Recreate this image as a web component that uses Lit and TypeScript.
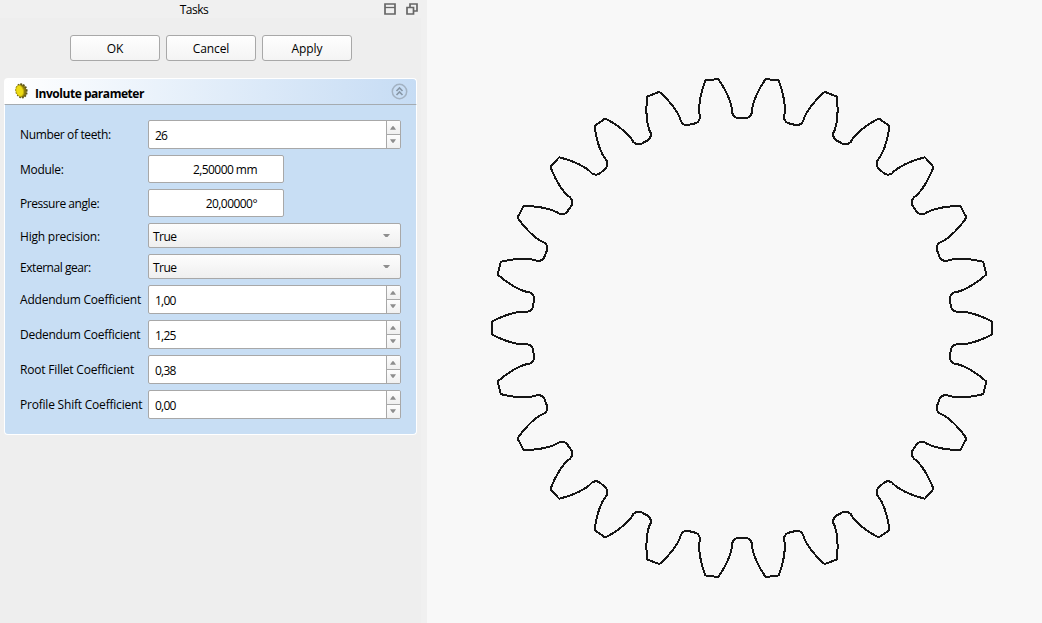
import { LitElement, html, css, svg, nothing } from "lit";
import { customElement, property } from "lit/decorators.js";

/** Builds the closed outline of an external involute gear centred on the origin. */
function gearPath(teeth: number, m: number, angle: number, add: number, ded: number): string {
  const pitch = (m * teeth) / 2;
  const tip = pitch + m * add;
  const root = pitch - m * ded;
  const base = pitch * Math.cos(angle);
  const inv = (a: number) => Math.tan(a) - a;
  const half = Math.PI / (2 * teeth) + inv(angle);
  const step = (2 * Math.PI) / teeth;
  const at = (r: number, a: number) => `${(r * Math.cos(a)).toFixed(2)} ${(r * Math.sin(a)).toFixed(2)}`;
  const flank: [number, number][] = [];
  for (let i = 0; i <= 8; i++) {
    const r = base + ((tip - base) * i) / 8;
    flank.push([r, half - inv(Math.acos(base / r))]);
  }
  const fillet = 5.6;
  let d = "";
  for (let t = 0; t < teeth; t++) {
    const c = t * step;
    d += `${t ? "L" : "M"}${at(root, c - half - fillet / root)}`;
    d += `Q${at(root + 0.9, c - half - 0.9 / root)} ${at(root + fillet, c - half)}`;
    for (const [r, a] of flank) d += `L${at(r, c - a)}`;
    for (const [r, a] of [...flank].reverse()) d += `L${at(r, c + a)}`;
    d += `L${at(root + fillet, c + half)}Q${at(root + 0.9, c + half + 0.9 / root)} ${at(root, c + half + fillet / root)}`;
  }
  return d + "Z";
}

@customElement("param-field")
class ParamField extends LitElement {
  @property() kind = "spin";
  @property() value = "";

  static styles = css`
    :host { display: block; }
    .box {
      box-sizing: border-box; display: flex; align-items: center; overflow: hidden;
      border: 1px solid #a8a8a8; border-radius: 2px; background: #fff;
    }
    .spin { width: 253px; height: 29px; }
    .quantity { width: 136px; height: 28px; }
    .combo { width: 253px; height: 25px; background: linear-gradient(#fdfdfd, #efefef); }
    .text { flex: 1; padding-left: 6px; padding-top: 3px; letter-spacing: -0.75px; }
    .quantity .text { text-align: right; padding-top: 2px; padding-right: 26px; letter-spacing: -0.55px; }
    .combo .text { padding-left: 4px; letter-spacing: -0.5px; }
    .steps { width: 13px; height: 100%; border-left: 1px solid #a8a8a8; display: flex; flex-direction: column; }
    .step { flex: 1; display: flex; align-items: center; justify-content: center; background: linear-gradient(#fdfdfd, #f0f0f0); }
    .step + .step { border-top: 1px solid #a8a8a8; }
    .arrow { display: block; fill: #8e8e8e; }
    .steps .arrow { margin-right: 1px; }
    .step + .step .arrow { margin-bottom: 2px; }
    .combo .arrow { margin-right: 10px; }
  `;

  render() {
    const down = svg`<path d="M0 0H7L4.5 3H2.5Z"/>`;
    return html`<div class="box ${this.kind}">
      <span class="text">${this.value}</span>
      ${this.kind === "spin"
        ? html`<div class="steps">
            <div class="step"><svg class="arrow" width="6" height="4" viewBox="0 0 7 4"><path d="M0 4H7L4.3 0H2.7Z" /></svg></div>
            <div class="step"><svg class="arrow" width="6" height="4" viewBox="0 0 7 4"><path d="M0 0H7L4.3 4H2.7Z" /></svg></div>
          </div>`
        : this.kind === "combo"
        ? html`<svg class="arrow" width="7" height="3" viewBox="0 0 7 3">${down}</svg>`
        : nothing}
    </div>`;
  }
}

interface Row { label: string; kind: string; value: string; spacing: number; }

const ROWS: Row[] = [
  { label: "Number of teeth:", kind: "spin", value: "26", spacing: -0.36 },
  { label: "Module:", kind: "quantity", value: "2,50000 mm", spacing: -0.3 },
  { label: "Pressure angle:", kind: "quantity", value: "20,00000°", spacing: -0.45 },
  { label: "High precision:", kind: "combo", value: "True", spacing: -0.22 },
  { label: "External gear:", kind: "combo", value: "True", spacing: -0.45 },
  { label: "Addendum Coefficient", kind: "spin", value: "1,00", spacing: -0.2 },
  { label: "Dedendum Coefficient", kind: "spin", value: "1,25", spacing: -0.26 },
  { label: "Root Fillet Coefficient", kind: "spin", value: "0,38", spacing: -0.19 },
  { label: "Profile Shift Coefficient", kind: "spin", value: "0,00", spacing: -0.21 },
];

@customElement("app-root")
class AppRoot extends LitElement {
  static styles = css`
    :host {
      display: grid; grid-template-columns: 427px 1fr; width: 1042px; height: 623px; overflow: hidden;
      font: 12px/16px "Open Sans", "Noto Sans", sans-serif; color: #000; background: #f8f8f8;
    }
    .panel { background: #eeeeee; border-right: 6px solid #f0f0f0; box-sizing: border-box; }
    .title { height: 18px; display: flex; align-items: center; background: #f0f0f0; }
    .name { width: 384px; padding-left: 4px; box-sizing: border-box; text-align: center; line-height: 18px; padding-top: 1px; letter-spacing: -0.5px; }
    .dock { display: block; }
    .dock + .dock { margin-left: 10px; }
    .buttons { display: flex; gap: 6px; padding: 17px 0 0 70px; }
    .button {
      box-sizing: border-box; width: 90px; height: 26px; border: 1px solid #a8a8a8; border-radius: 3px;
      background: linear-gradient(#fefefe, #f4f4f4); text-align: center; line-height: 26px; letter-spacing: -0.1px;
    }
    .group { margin: 17px 0 0 4px; width: 413px; }
    .header {
      box-sizing: border-box; height: 27px; display: flex; align-items: center; border: 1px solid #fff; border-bottom-color: #a5abb0;
      border-radius: 4px 4px 0 0; background: linear-gradient(90deg, #fff, #c6dcf4);
    }
    .gear { display: block; margin: 0 7px 1px 9px; }
    .heading { flex: 1; font-weight: 700; padding-top: 4px; letter-spacing: -0.46px; }
    .collapse { display: block; margin: 0 8px 1px 0; }
    .body {
      box-sizing: border-box; height: 330px; border: 1px solid #fff; border-top: 0; border-radius: 0 0 4px 4px;
      background: #c8def4; padding: 15px 15px 0; display: flex; flex-direction: column; gap: 6px;
    }
    .row { display: grid; grid-template-columns: 128px 253px; align-items: center; }
    .label { white-space: nowrap; padding-top: 1px; }
    .label.quantity, .label.combo { padding-top: 2px; }
    .view { display: block; }
    .outline { fill: none; stroke: #161616; stroke-width: 2; stroke-linejoin: round; shape-rendering: crispEdges; }
  `;

  render() {
    return html`
      <div class="panel">
        <div class="title">
          <span class="name">Tasks</span>
          <svg class="dock" width="12" height="12" viewBox="0 0 12 12" fill="none" stroke="#666">
            <path d="M1 1H11V11H1Z" stroke-width="1.7" /><path d="M1 4.5H11" stroke-width="1.3" />
          </svg>
          <svg class="dock" width="12" height="12" viewBox="0 0 12 12" fill="none" stroke="#666" stroke-width="1.7">
            <path d="M4 4V1H11V8H8M1 4.5H7.5V11H1Z" />
          </svg>
        </div>
        <div class="buttons">
          ${["OK", "Cancel", "Apply"].map((t) => html`<div class="button">${t}</div>`)}
        </div>
        <div class="group">
          <div class="header">
            <svg class="gear" width="14" height="16" viewBox="0 0 14 16">
              <ellipse cx="7.5" cy="8" rx="5.2" ry="6.7" fill="#8c7b10" stroke="#5b5318" stroke-width="1.8" stroke-dasharray="1.7 1.1" transform="rotate(-12 7 8)" />
              <ellipse cx="5.8" cy="7.8" rx="3.7" ry="5.6" fill="#eddb13" stroke="#c6b20b" stroke-width=".8" transform="rotate(-14 6 8)" />
            </svg>
            <span class="heading">Involute parameter</span>
            <svg class="collapse" width="17" height="17" viewBox="0 0 17 17" fill="none">
              <circle cx="8.5" cy="8.5" r="7.2" stroke="#a3b2c2" stroke-width="1.5" />
              <path d="M5.5 8L8.5 5L11.5 8M5.5 12L8.5 9L11.5 12" stroke="#8897a6" stroke-width="1.6" />
            </svg>
          </div>
          <div class="body">
            ${ROWS.map((r) => html`<div class="row">
              <span class="label ${r.kind}" style="letter-spacing:${r.spacing}px">${r.label}</span>
              <param-field .kind=${r.kind} .value=${r.value}></param-field>
            </div>`)}
          </div>
        </div>
      </div>
      <svg class="view" width="615" height="623" viewBox="427 0 615 623">
        <g transform="translate(742 328)">
          <path class="outline" d=${gearPath(26, 17.87, Math.PI / 9, 1, 1.25)} />
        </g>
      </svg>
    `;
  }
}
